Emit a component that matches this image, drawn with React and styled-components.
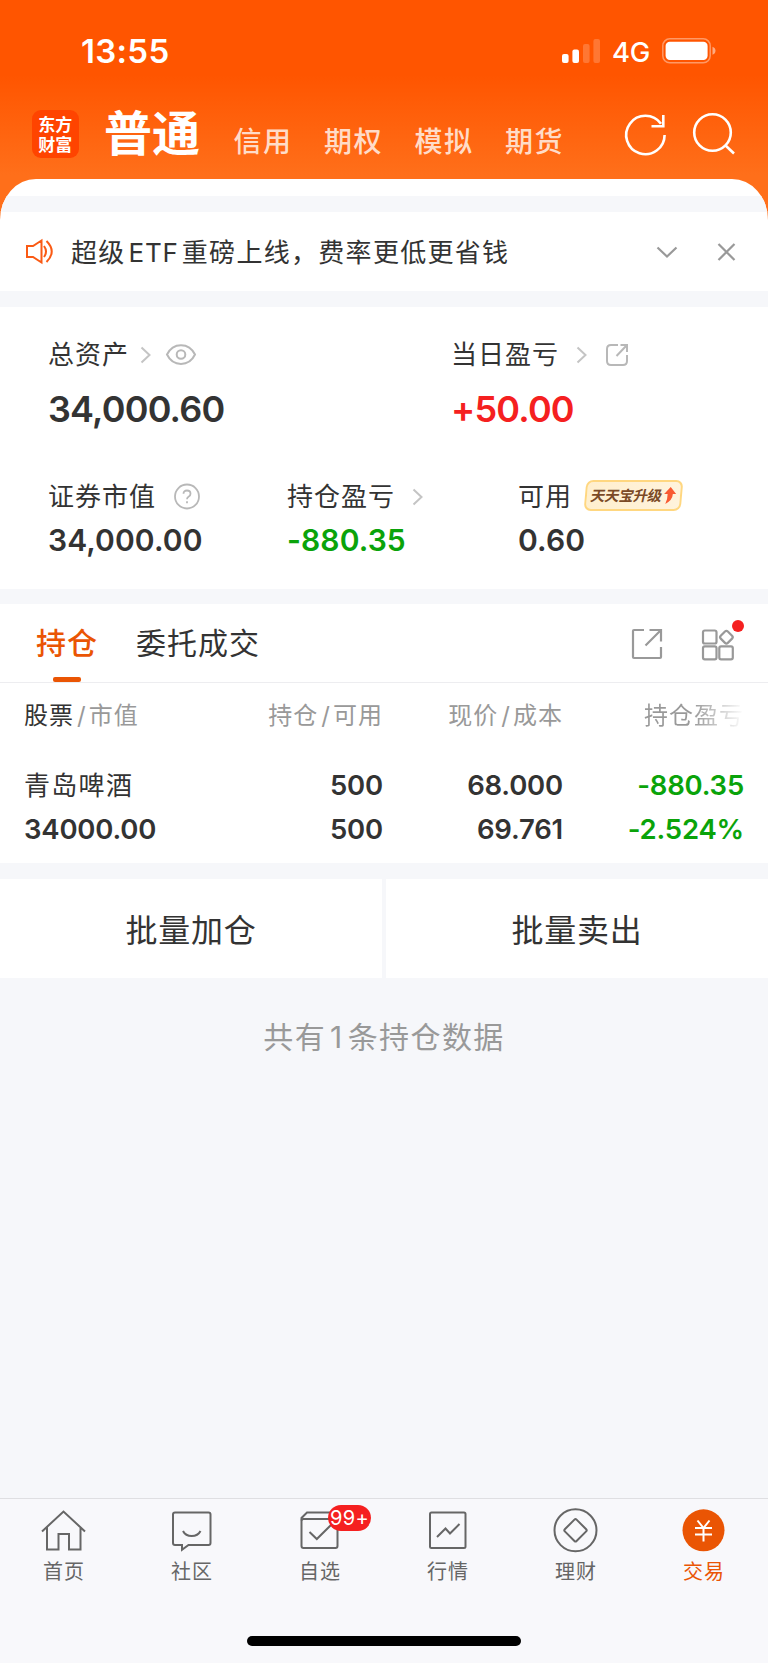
import React from 'react';
import styled, { createGlobalStyle } from 'styled-components';

const GlobalStyle = createGlobalStyle`
  * { box-sizing: border-box; }
  body {
    margin: 0;
    background: #f6f7fa;
    font-family: Inter, "Noto Sans CJK SC", sans-serif;
    color: #333;
  }
  svg { display: block; flex: none; fill: none; overflow: visible; }
`;

const Page = styled.div`
  display: flex;
  flex-direction: column;
  width: 768px;
  height: 1663px;
  overflow: hidden;
`;

/* ---------- header ---------- */
const Top = styled.div`
  background: linear-gradient(#ff5500 0, #ff5500 75px, #ff6f1a 175px);
`;
const StatusBar = styled.div`
  display: flex;
  align-items: center;
  height: 102px;
  padding: 0 52px 0 81px;
  color: #fff;
`;
const Clock = styled.div`
  flex: 1;
  font-size: 33px;
  font-weight: 600;
  line-height: 40px;
  letter-spacing: 0.3px;
`;
const Network = styled.div`
  width: 38px;
  margin: 2px 12px 0 11px;
  font-size: 27.5px;
  font-weight: 500;
  line-height: 32px;
  letter-spacing: -0.3px;
`;
const Nav = styled.div`
  display: flex;
  align-items: center;
  height: 77px;
  padding: 0 33px 13px 31.5px;
`;
const Logo = styled.div`
  display: flex;
  flex-direction: column;
  align-items: center;
  width: 47.5px;
  height: 47.5px;
  padding-top: 4px;
  border-radius: 9px;
  background: #ff4400;
  color: #fff;
  font-family: "Noto Sans CJK SC", sans-serif;
  font-size: 17px;
  font-weight: 700;
  line-height: 20px;
`;
const Account = styled.div`
  width: 129.5px;
  margin-left: 25px;
  font-size: 48px;
  line-height: 60px;
  font-weight: 700;
  color: #fff;
`;
const AccountLink = styled.div`
  width: 90.5px;
  padding-top: 16px;
  font-size: 28px;
  font-weight: 500;
  line-height: 36px;
  letter-spacing: 1.5px;
  color: #ffdcc8;
`;
const NavIcons = styled.div`
  display: flex;
  gap: 26px;
  margin-left: auto;
`;
const Sheet = styled.div`
  height: 46px;
  padding-top: 17px;
  border-radius: 36px 36px 0 0 / 41px 41px 0 0;
  background: #fff;
  overflow: hidden;
`;
const Strip = styled.div`
  height: 16px;
  background: #f6f7fa;
`;

/* ---------- notice ---------- */
const Notice = styled.div`
  display: flex;
  align-items: center;
  height: 66px;
  padding: 0 33px 12px 26px;
  background: #fff;
`;
const NoticeText = styled.div`
  flex: 1;
  margin: 1px 0 0 17px;
  font-size: 26px;
  line-height: 36px;
  letter-spacing: 1.3px;
  white-space: nowrap;
  span { margin: 0 3px; letter-spacing: 0.8px; }
`;

/* ---------- assets ---------- */
const Assets = styled.div`
  height: 282px;
  margin-top: 16px;
  padding: 30px 0 0 48px;
  background: #fff;
`;
const AssetRow = styled.div`
  display: grid;
  grid-template-columns: ${props => props.cols};
  height: ${props => props.height}px;
`;
const Label = styled.div`
  display: flex;
  align-items: center;
  height: 36px;
  font-size: 26px;
  line-height: 36px;
  letter-spacing: 1px;
  white-space: nowrap;
`;
const Amount = styled.div`
  margin-top: ${props => (props.big ? 14 : 7)}px;
  font-size: ${props => (props.big ? 36 : 30)}px;
  line-height: ${props => (props.big ? 44 : 36)}px;
  font-weight: 600;
  letter-spacing: ${props => (props.big ? -0.8 : 0.1)}px;
  color: ${props => props.color || '#333'};
`;
const Promo = styled.div`
  display: flex;
  align-items: center;
  justify-content: center;
  gap: 2px;
  width: 97px;
  height: 31px;
  margin: -3px 0 0 13px;
  border: 2px solid #ffd780;
  border-radius: 7px;
  background: linear-gradient(90deg, #ffefce, #fff3dc);
  transform: skewX(-5deg);
  color: #7b4a26;
  font-size: 14.5px;
  font-weight: 700;
  letter-spacing: -0.3px;
  span { transform: skewX(-8deg); }
`;

/* ---------- positions ---------- */
const Positions = styled.div`
  height: 259px;
  margin-top: 15px;
  background: #fff;
`;
const Tabs = styled.div`
  display: flex;
  height: 79px;
  padding: 0 33px 0 36px;
  border-bottom: 1px solid #ededf0;
`;
const Tab = styled.div`
  display: flex;
  flex-direction: column;
  align-items: center;
  margin-right: 38px;
  padding-top: 19px;
  font-size: 30px;
  line-height: 40px;
  letter-spacing: 1px;
  font-weight: ${props => (props.active ? 500 : 400)};
  color: ${props => (props.active ? '#ea5504' : '#333')};
  &::after {
    content: '';
    width: 28px;
    height: 6px;
    margin-top: 14px;
    border-radius: 2px;
    background: ${props => (props.active ? '#ea5504' : 'transparent')};
  }
`;
const TabTools = styled.div`
  display: flex;
  gap: 40px;
  margin-left: auto;
  padding-top: 24.5px;
`;
const ToolWithDot = styled.div`
  position: relative;
  height: 32px;
  margin-right: 1px;
  &::after {
    content: '';
    position: absolute;
    top: -9px;
    right: -10px;
    width: 12px;
    height: 12px;
    border-radius: 50%;
    background: #f52020;
  }
`;
const Grid = styled.div`
  display: grid;
  grid-template-columns: 159px 200px 180px 181px;
  padding: 0 24px;
  white-space: nowrap;
`;
const HeadCell = styled.div`
  height: 80px;
  font-size: 24px;
  line-height: 66px;
  letter-spacing: 1px;
  text-align: ${props => (props.first ? 'left' : 'right')};
  color: #999;
  b { font-weight: 400; color: #333; }
  span { margin: 0 2px 0 3px; }
`;
const FadeCell = styled(HeadCell)`
  background: linear-gradient(90deg, #999 72%, rgba(153, 153, 153, 0) 100%);
  background-clip: text;
  color: transparent;
`;
const Cell = styled.div`
  height: 44px;
  padding-top: ${props => (props.cjk ? 1 : 0)}px;
  font-size: ${props => (props.cjk ? 26 : 27.5)}px;
  line-height: 44px;
  font-weight: ${props => (props.cjk ? 400 : 600)};
  letter-spacing: ${props => (props.cjk ? 1.3 : -0.2)}px;
  text-align: ${props => (props.left ? 'left' : 'right')};
  color: ${props => (props.down ? '#0aa30a' : '#333')};
`;
const Actions = styled.div`
  display: grid;
  grid-template-columns: 1fr 1fr;
  gap: 4px;
  margin-top: 16px;
`;
const Action = styled.div`
  height: 99px;
  background: #fff;
  font-size: 32px;
  line-height: 103px;
  letter-spacing: 0.8px;
  text-align: center;
`;
const Summary = styled.div`
  flex: 1;
  padding-top: 38px;
  font-size: 30px;
  line-height: 42px;
  letter-spacing: 1.4px;
  text-align: center;
  color: #999;
  span { margin: 0 4px; }
`;

/* ---------- bottom bar ---------- */
const BottomBar = styled.div`
  height: 165px;
  border-top: 1px solid #dfdfe2;
  background: #f8f8fb;
`;
const BottomTabs = styled.div`
  display: grid;
  grid-template-columns: repeat(6, 1fr);
  height: 137px;
  padding-top: 10.5px;
`;
const BottomTab = styled.div`
  position: relative;
  display: flex;
  flex-direction: column;
  align-items: center;
  gap: 5px;
  font-size: 20px;
  line-height: 30px;
  letter-spacing: 1px;
  color: ${props => (props.active ? '#ea5504' : '#666')};
  svg { margin-right: 1px; }
`;
const Count = styled.div`
  position: absolute;
  top: -5px;
  left: 72px;
  width: 43px;
  height: 26px;
  border-radius: 13px;
  background: #f52020;
  color: #fff;
  font-size: 20px;
  line-height: 27px;
  letter-spacing: 0.3px;
  text-align: center;
`;
const HomeIndicator = styled.div`
  width: 274px;
  height: 10px;
  margin: 0 auto;
  border-radius: 5px;
  background: #000;
`;

const Arrow = ({ ml }) => (
  <svg width="10" height="16" stroke="#c4c4c4" strokeWidth="2" style={{ marginLeft: ml }}>
    <path d="M.5 .5 8.500 8 .5 15.500" />
  </svg>
);

const Signal = () => (
  <svg width="39" height="26" viewBox="0 0 39 26">
    <g fill="#fff">
      <rect x="0" y="16" width="6.600" height="9" rx="2" />
      <rect x="10.400" y="11.500" width="6.600" height="13.500" rx="2" />
      <rect x="21" y="6" width="6.600" height="19" rx="2" opacity=".2" />
      <rect x="31.400" y="1" width="6.600" height="24" rx="2" opacity=".2" />
    </g>
  </svg>
);

const Battery = () => (
  <svg width="54" height="26" viewBox="0 0 54 26">
    <rect x=".8" y=".8" width="47.400" height="24" rx="7" stroke="#fff" strokeOpacity=".4" strokeWidth="1.500" />
    <rect x="3.600" y="3.800" width="42" height="18.200" rx="4.200" fill="#fff" />
    <path d="M50.500 8.800q3 1.200 3 4t-3 4z" fill="#fff" fillOpacity=".5" />
  </svg>
);

const icons = {
  首页: (
    <path d="M1 21.500 22.500 1.500 44 21.500M6 17.500V39.500H17.500V24H28V39.500H39.500V17.500" />
  ),
  社区: (
    <>
      <path d="M6 2.500H39.500Q41.500 2.500 41.500 4.500V33Q41.500 35 39.500 35H19.500L13 39.800V35H6Q4 35 4 33V4.500Q4 2.500 6 2.500" />
      <path d="M14 21q2.500 5 8.700 5t8.800-5" />
    </>
  ),
  自选: (
    <>
      <rect x="4.500" y="9" width="36" height="29" rx="2" />
      <path d="M4.500 10.500V8L10 2.500H40.500V10M12.500 22 19.800 29 34 15" />
    </>
  ),
  行情: (
    <>
      <rect x="5" y="2.500" width="35.500" height="35.500" rx="1.500" />
      <path d="M12 27 20.500 18.500 25 23.500 34.500 14" />
    </>
  ),
  理财: (
    <>
      <circle cx="22.500" cy="20.300" r="21" />
      <rect x="14.200" y="12" width="16.600" height="16.600" rx="1.500" transform="rotate(45 22.500 20.300)" />
    </>
  ),
  交易: (
    <>
      <circle cx="22.500" cy="20.300" r="21" fill="#ea5504" stroke="none" />
      <path stroke="#fff" d="M16.500 10.500 22.500 18 28.500 10.500M22.500 18V31.500M14 18H31M14 24.500H31" />
    </>
  ),
};

function Header() {
  return (
    <Top>
      <StatusBar>
        <Clock>13:55</Clock>
        <Signal />
        <Network>4G</Network>
        <Battery />
      </StatusBar>
      <Nav>
        <Logo>
          <div>东方</div>
          <div>财富</div>
        </Logo>
        <Account>普通</Account>
        {['信用', '期权', '模拟', '期货'].map(name => <AccountLink key={name}>{name}</AccountLink>)}
        <NavIcons>
          <svg width="42" height="42" stroke="#fff" strokeWidth="2.600">
            <path d="M39.600 22A19.200 19.200 0 1 1 36 10.800M38.300 2V13.300H26.500" />
          </svg>
          <svg width="42" height="42" stroke="#fff" strokeWidth="2.600">
            <circle cx="19.500" cy="19.500" r="18.300" />
            <path d="M32 32 41 40.500" />
          </svg>
        </NavIcons>
      </Nav>
      <Sheet>
        <Strip />
      </Sheet>
    </Top>
  );
}

function AssetPanel() {
  return (
    <Assets>
      <AssetRow cols="403px 1fr" height={142}>
        <div>
          <Label>
            总资产
            <Arrow ml={12} />
            <svg width="30" height="22" stroke="#b8b8b8" strokeWidth="2" style={{ marginLeft: 15 }}>
              <path d="M1 10.500C7 -2 23 -2 29 10.500C23 23 7 23 1 10.500Z" />
              <circle cx="15" cy="10.500" r="4.300" />
            </svg>
          </Label>
          <Amount big>34,000.60</Amount>
        </div>
        <div>
          <Label>
            当日盈亏
            <Arrow ml={18} />
            <svg width="22" height="22" stroke="#b8b8b8" strokeWidth="2" style={{ marginLeft: 19 }}>
              <path d="M12 1H5Q1 1 1 5V17Q1 21 5 21H17Q21 21 21 17V11M14.500 1H21V8M21 1 10.500 12" />
            </svg>
          </Label>
          <Amount big color="#f52020">+50.00</Amount>
        </div>
      </AssetRow>
      <AssetRow cols="239px 231px 1fr" height={90}>
        <div>
          <Label>
            证券市值
            <svg width="26" height="26" stroke="#b8b8b8" strokeWidth="1.800" style={{ marginLeft: 18 }}>
              <circle cx="13" cy="12.500" r="12" />
              <path d="M9.500 9.800Q9.500 6.500 13 6.500T16.500 9.700Q16.500 11.500 14.500 12.700Q13 13.700 13 15.300M13 17.200V19.300" />
            </svg>
          </Label>
          <Amount>34,000.00</Amount>
        </div>
        <div>
          <Label>
            持仓盈亏
            <Arrow ml={18} />
          </Label>
          <Amount color="#0aa30a">-880.35</Amount>
        </div>
        <div>
          <Label>
            可用
            <Promo>
              <span>天天宝升级</span>
              <svg width="12" height="17">
                <path fill="#f95a32" d="M6 0 12 7H8.700Q9 13 2 17Q4 12 3.500 7H0Z" />
              </svg>
            </Promo>
          </Label>
          <Amount>0.60</Amount>
        </div>
      </AssetRow>
    </Assets>
  );
}

function PositionPanel() {
  return (
    <Positions>
      <Tabs>
        <Tab active>持仓</Tab>
        <Tab>委托成交</Tab>
        <TabTools>
          <svg width="30" height="30" stroke="#999" strokeWidth="2.200">
            <path d="M12 1H2Q1 1 1 2V28Q1 29 2 29H28Q29 29 29 28V18M17.500 1H29V12.500M29 1 13.500 16.500" />
          </svg>
          <ToolWithDot>
            <svg width="32" height="32" stroke="#999" strokeWidth="2.200">
              <rect x="1" y="1.500" width="13.500" height="13" rx="1.800" />
              <rect x="1" y="17.300" width="13.500" height="13" rx="1.800" />
              <rect x="17.300" y="17.300" width="13.500" height="13" rx="1.800" />
              <rect x="19.400" y="3.200" width="10" height="10" rx="2" transform="rotate(45 24.400 8.200)" />
            </svg>
          </ToolWithDot>
        </TabTools>
      </Tabs>
      <Grid>
        <HeadCell first><b>股票</b><span>/</span>市值</HeadCell>
        <HeadCell>持仓<span>/</span>可用</HeadCell>
        <HeadCell>现价<span>/</span>成本</HeadCell>
        <FadeCell>持仓盈亏</FadeCell>
        <Cell cjk left>青岛啤酒</Cell>
        <Cell>500</Cell>
        <Cell>68.000</Cell>
        <Cell down>-880.35</Cell>
        <Cell left>34000.00</Cell>
        <Cell>500</Cell>
        <Cell>69.761</Cell>
        <Cell down>-2.524%</Cell>
      </Grid>
    </Positions>
  );
}

function App() {
  return (
    <Page>
      <GlobalStyle />
      <Header />
      <Notice>
        <svg width="28" height="24" stroke="#fa5a14" strokeWidth="2">
          <path d="M1 6H7L15.500 .5V22.500L7 17H1ZM18 6Q22 11.500 18 17M20.500 1Q31 11.500 20.500 22" />
        </svg>
        <NoticeText>超级<span>ETF</span>重磅上线，费率更低更省钱</NoticeText>
        <svg width="20" height="11" stroke="#999" strokeWidth="2.200"><path d="M.5 .5 10 9.500 19.500 .5" /></svg>
        <svg width="17" height="17" stroke="#999" strokeWidth="2.200" style={{ marginLeft: 41 }}>
          <path d="M.5 0 16.500 16M16.500 0 .5 16" />
        </svg>
      </Notice>
      <AssetPanel />
      <PositionPanel />
      <Actions>
        <Action>批量加仓</Action>
        <Action>批量卖出</Action>
      </Actions>
      <Summary>共有<span>1</span>条持仓数据</Summary>
      <BottomBar>
        <BottomTabs>
          {Object.keys(icons).map(name => (
            <BottomTab key={name} active={name === '交易'}>
              <svg width="45" height="42" stroke="#666" strokeWidth="2">{icons[name]}</svg>
              {name}
              {name === '自选' && <Count>99+</Count>}
            </BottomTab>
          ))}
        </BottomTabs>
        <HomeIndicator />
      </BottomBar>
    </Page>
  );
}

export default App;
